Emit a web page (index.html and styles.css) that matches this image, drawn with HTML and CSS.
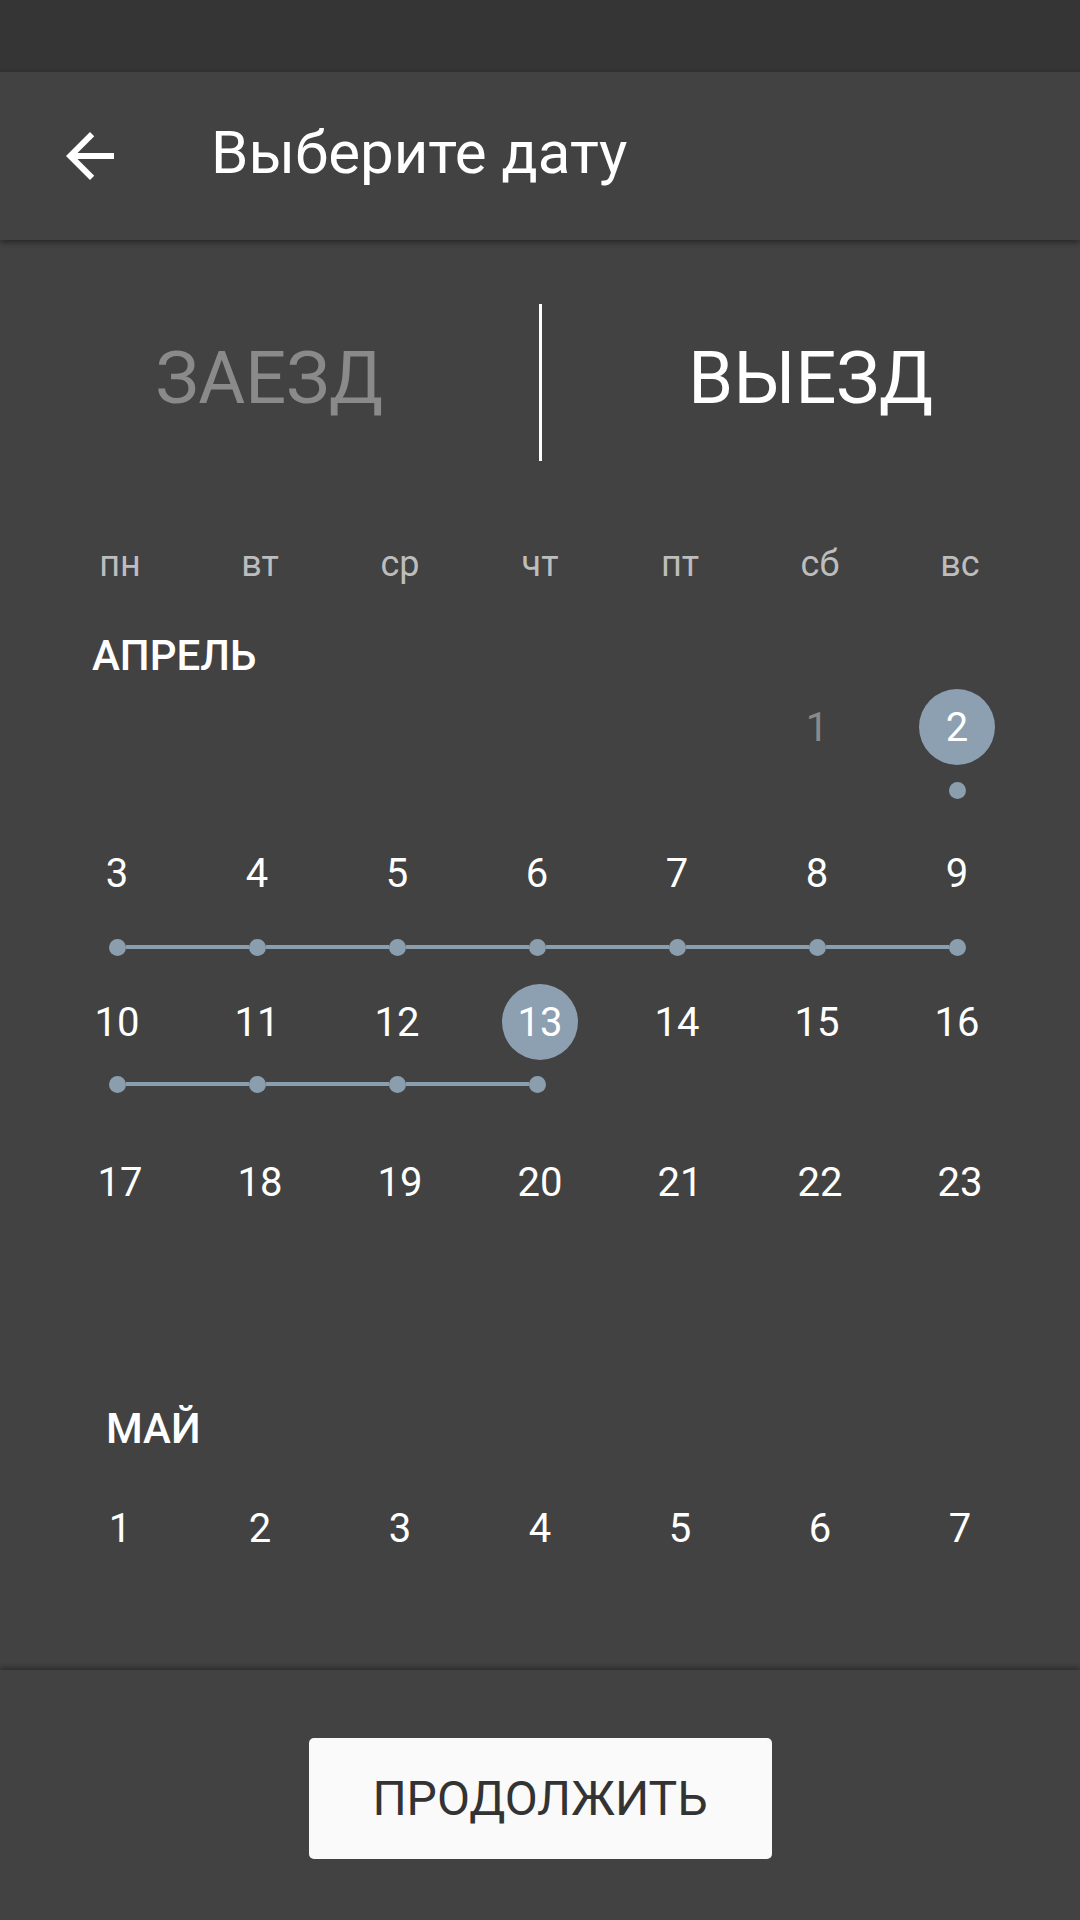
FILE: index.html
```html
<!DOCTYPE html>
<html lang="ru">
<head>
<meta charset="utf-8">
<title>Выберите дату</title>
<link rel="stylesheet" href="styles.css">
</head>
<body>
<div class="screen">
  <div class="status"></div>
  <header class="toolbar">
    <svg class="back" viewBox="0 0 24 24" width="72" height="72"><path fill="#fff" d="M20 11H7.83l5.59-5.59L12 4l-8 8 8 8 1.41-1.41L7.83 13H20v-2z"/></svg>
    <h1 class="title">Выберите дату</h1>
  </header>
  <main class="content">
    <div class="tabs">
      <div class="tab inactive">ЗАЕЗД</div>
      <div class="divider"></div>
      <div class="tab active">ВЫЕЗД</div>
    </div>
    <div class="weekdays">
      <span>пн</span><span>вт</span><span>ср</span><span>чт</span><span>пт</span><span>сб</span><span>вс</span>
    </div>
    <div class="month april">АПРЕЛЬ</div>
    <div class="week w1 ranged">
      <div class="days">
        <span></span><span></span><span></span><span></span><span></span>
        <span class="off">1</span>
        <span class="sel"><b>2</b></span>
      </div>
      <div class="marks">
        <span></span><span></span><span></span><span></span><span></span><span></span>
        <span class="mark"><i class="seg"></i><i class="dot"></i><i class="seg"></i></span>
      </div>
    </div>
    <div class="week w2 ranged">
      <div class="days">
        <span>3</span><span>4</span><span>5</span><span>6</span><span>7</span><span>8</span><span>9</span>
      </div>
      <div class="marks">
        <span class="mark"><i class="seg"></i><i class="dot"></i><i class="seg on"></i></span>
        <span class="mark"><i class="seg on"></i><i class="dot"></i><i class="seg on"></i></span>
        <span class="mark"><i class="seg on"></i><i class="dot"></i><i class="seg on"></i></span>
        <span class="mark"><i class="seg on"></i><i class="dot"></i><i class="seg on"></i></span>
        <span class="mark"><i class="seg on"></i><i class="dot"></i><i class="seg on"></i></span>
        <span class="mark"><i class="seg on"></i><i class="dot"></i><i class="seg on"></i></span>
        <span class="mark"><i class="seg on"></i><i class="dot"></i><i class="seg"></i></span>
      </div>
    </div>
    <div class="week w3 ranged">
      <div class="days">
        <span>10</span><span>11</span><span>12</span><span class="sel"><b>13</b></span><span>14</span><span>15</span><span>16</span>
      </div>
      <div class="marks">
        <span class="mark"><i class="seg"></i><i class="dot"></i><i class="seg on"></i></span>
        <span class="mark"><i class="seg on"></i><i class="dot"></i><i class="seg on"></i></span>
        <span class="mark"><i class="seg on"></i><i class="dot"></i><i class="seg on"></i></span>
        <span class="mark"><i class="seg on"></i><i class="dot"></i><i class="seg"></i></span>
        <span></span><span></span><span></span>
      </div>
    </div>
    <div class="week w4">
      <div class="days">
        <span>17</span><span>18</span><span>19</span><span>20</span><span>21</span><span>22</span><span>23</span>
      </div>
    </div>
    <div class="month may">МАЙ</div>
    <div class="week w5">
      <div class="days">
        <span>1</span><span>2</span><span>3</span><span>4</span><span>5</span><span>6</span><span>7</span>
      </div>
    </div>
  </main>
  <footer class="bottom">
    <button class="continue">ПРОДОЛЖИТЬ</button>
  </footer>
</div>
</body>
</html>
```

FILE: styles.css
```css
html, body {
  margin: 0;
  padding: 0;
  background: #424242;
}
.screen {
  width: 1080px;
  height: 1920px;
  display: flex;
  flex-direction: column;
  font-family: Roboto, "Noto Sans", "DejaVu Sans", sans-serif;
  color: #fff;
  overflow: hidden;
}
.status {
  height: 72px;
  background: #353535;
  flex: none;
}
.toolbar {
  height: 168px;
  flex: none;
  background: #424242;
  display: flex;
  align-items: center;
  padding-left: 54px;
  box-shadow: 0 2px 6px rgba(0,0,0,0.45);
  position: relative;
  z-index: 1;
}
.back {
  display: block;
  flex: none;
}
.title {
  margin: 0 0 6px 85px;
  font-size: 60px;
  font-weight: 400;
  line-height: 70px;
}
.content {
  flex: 1;
  display: flex;
  flex-direction: column;
}
.tabs {
  display: flex;
  height: 157px;
  margin-top: 64px;
}
.tab {
  flex: 1;
  display: flex;
  align-items: center;
  justify-content: center;
  font-size: 72px;
  padding-bottom: 8px;
}
.tab.inactive { color: #8a8a8a; }
.tab.active { color: #fff; }
.divider {
  width: 3px;
  background: #fff;
  flex: none;
}
.weekdays, .days, .marks {
  display: grid;
  grid-template-columns: repeat(7, 140px);
  padding: 0 50px;
}
.ranged .days, .ranged .marks {
  padding-left: 47px;
}
.weekdays {
  margin-top: 78px;
  height: 50px;
}
.weekdays span {
  display: flex;
  align-items: center;
  justify-content: center;
  font-size: 36px;
  color: #bdbdbd;
}
.month {
  height: 50px;
  display: flex;
  align-items: center;
  font-size: 42px;
  font-weight: 500;
}
.month.april { margin-top: 41px; padding-left: 92px; }
.month.may { margin-top: 183px; padding-left: 106px; }
.days span {
  height: 76px;
  display: flex;
  align-items: center;
  justify-content: center;
  font-size: 40px;
  color: #fff;
}
.days .off { color: #8a8a8a; }
.days .sel b {
  width: 76px;
  height: 76px;
  border-radius: 50%;
  background: #8ca0b1;
  display: flex;
  align-items: center;
  justify-content: center;
  font-weight: 400;
}
.w3 .days .sel b {
  margin-left: 6px;
}
.marks span {
  height: 24px;
}
.mark {
  display: flex;
  align-items: center;
}
.seg {
  flex: 1;
  height: 4px;
}
.seg.on { background: #8a9eae; }
.dot {
  width: 17px;
  height: 17px;
  border-radius: 50%;
  background: #8a9eae;
  flex: none;
}
.w1 { margin-top: 9px; }
.w1 .marks { margin-top: 13px; }
.w2 { margin-top: 33px; }
.w2 .marks { margin-top: 24px; }
.w3 { margin-top: 25px; }
.w3 .marks { margin-top: 12px; }
.w4 { margin-top: 48px; }
.w5 { margin-top: 37px; }
.bottom {
  height: 250px;
  flex: none;
  background: #424242;
  box-shadow: 0 -2px 6px rgba(0,0,0,0.4);
  display: flex;
  justify-content: center;
  align-items: flex-start;
  position: relative;
}
.continue {
  margin-top: 68px;
  width: 463px;
  height: 121px;
  border: none;
  border-radius: 5px;
  background: #fafafa;
  color: #333;
  font-family: Roboto, "Noto Sans", sans-serif;
  font-size: 48px;
  letter-spacing: 0;
  padding: 0;
}
```
